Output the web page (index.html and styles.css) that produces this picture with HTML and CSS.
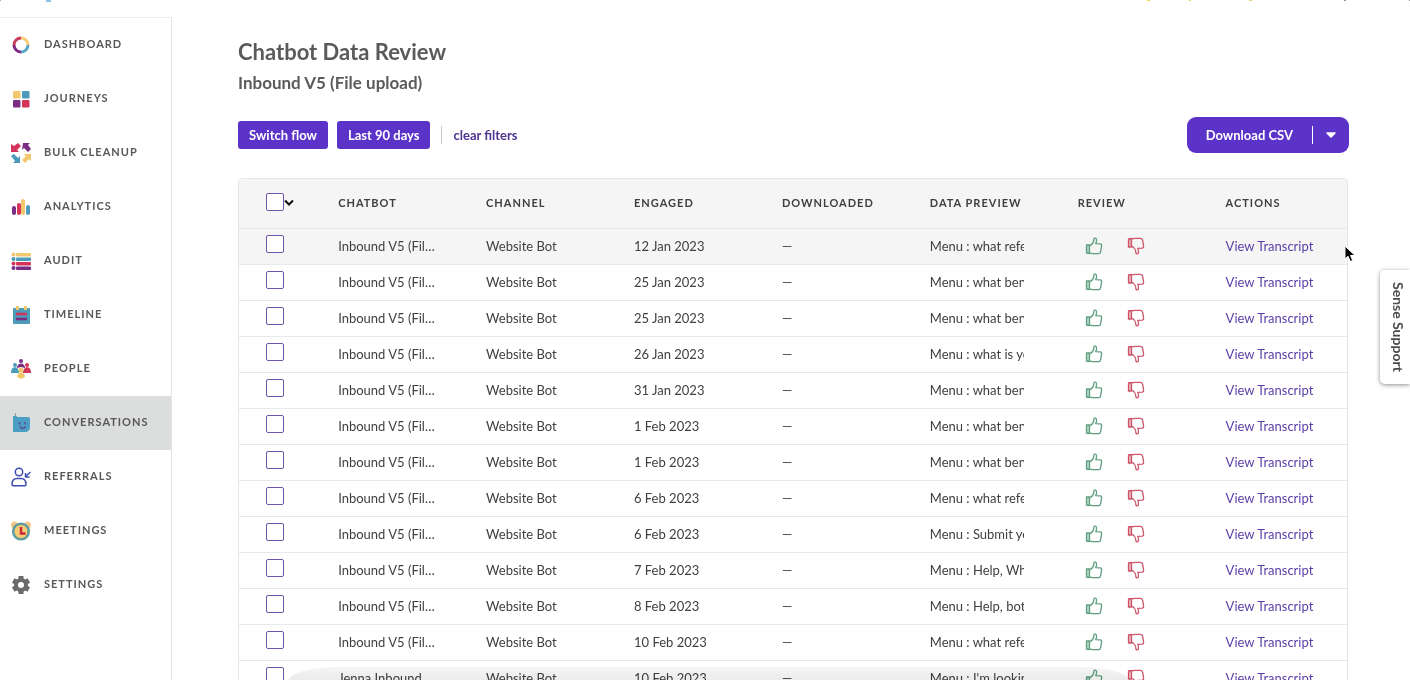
FILE: index.html
```
<!DOCTYPE html>
<html lang="en">
<head>
    <meta charset="UTF-8">
    <meta name="viewport" content="width=device-width, initial-scale=1.0">
    <title>Chatbot Data Review</title>
    <link rel="stylesheet" href="styles.css">
</head>
<body>
    <!-- Shared icons -->
    <svg class="sprite" aria-hidden="true">
        <symbol id="thumb" viewBox="0 0 18 18">
            <path d="M1.500 8h3v8.500l-3-.5zM4.500 9C6.500 8 8.300 6 8.700 3.800l.2-1.800c.3-1.300 2.300-1.100 2.600.4.300 1.500-.1 2.900-.8 4.300l4.400.2c1.200.1 1.700 1 1.500 1.900l-1 6c-.2 1.200-.9 1.800-2 1.900H8.200c-1.500 0-2.200-.6-3.700-.8" fill="none" stroke="currentColor" stroke-width="1.300" stroke-linejoin="round"/>
            <path d="M3 8v8" stroke="currentColor" stroke-width="1.400" opacity=".6"/>
        </symbol>
    </svg>

    <div class="topbar">
        <svg width="60" height="2"><path fill="#aaa" d="M0 0h1v1H0z"/><path fill="#8fc4e4" d="M46 0h5v2h-5z"/></svg>
        <svg width="280" height="2"><path fill="#e8d84a" d="M17 0h3v1h-3zM59 0h2v1h-2z"/><path fill="#e5cf79" d="M119 0h3v1h-3z"/><path fill="#999" d="M214 0h2v1h-2zM279 0h1v1h-1z"/></svg>
    </div>

    <div class="layout">
        <nav class="sidebar">
            <a href="#dashboard" class="nav-link">
                <svg class="nav-icon" viewBox="0 0 20 20" fill="none" stroke-width="3">
                    <path d="M10 3a7 7 0 0 1 7 7" stroke="#f7cd76"/>
                    <path d="M17 10a7 7 0 0 1-7 7" stroke="#58a5c5"/>
                    <path d="M10 17a7 7 0 0 1-7-7" stroke="#7d2a83"/>
                    <path d="M3 10a7 7 0 0 1 7-7" stroke="#c93c5c"/>
                </svg>
                <span>Dashboard</span>
            </a>
            <a href="#journeys" class="nav-link">
                <svg class="nav-icon" viewBox="0 0 20 20">
                    <rect x="2" y="2" width="7.500" height="7.500" rx="1" fill="#f2c76e"/>
                    <rect x="11" y="2" width="7.500" height="7.500" rx="1" fill="#4c9bba"/>
                    <rect x="2" y="11" width="7.500" height="7.500" rx="1" fill="#7b2c83"/>
                    <rect x="11" y="11" width="7.500" height="7.500" rx="1" fill="#d43459"/>
                </svg>
                <span>Journeys</span>
            </a>
            <a href="#cleanup" class="nav-link">
                <svg class="nav-icon" viewBox="0 0 20 20">
                    <path fill="#d43459" d="M0 1l3 2 4-3 3 3-4 4 2 2H0z"/>
                    <path fill="#7b2c83" d="M12 0h7l-2 2 3 4-3 3-4-4-2 2z"/>
                    <path fill="#4c9bba" d="M0 13l3-2 4 4 2-2v7H2l2-2z"/>
                    <path fill="#f2c76e" d="M12 11h8v7l-2-2-4 4-3-3 4-4z"/>
                </svg>
                <span>Bulk Cleanup</span>
            </a>
            <a href="#analytics" class="nav-link">
                <svg class="nav-icon" viewBox="0 0 20 20">
                    <rect x="1" y="9" width="4" height="9" rx="2" fill="#7b2c83"/>
                    <rect x="6" y="6" width="4" height="12" rx="2" fill="#d43459"/>
                    <rect x="10" y="2" width="4" height="16" rx="2" fill="#f2c76e"/>
                    <rect x="15" y="8" width="4" height="10" rx="2" fill="#4c9bba"/>
                </svg>
                <span>Analytics</span>
            </a>
            <a href="#audit" class="nav-link">
                <svg class="nav-icon" viewBox="0 0 20 20">
                    <g fill="#f2c76e"><circle cx="2.500" cy="3.500" r="2"/><rect x="5" y="2" width="15" height="3.500" rx="1"/></g>
                    <g fill="#4c9bba"><circle cx="2.500" cy="8" r="2"/><rect x="5" y="6.500" width="15" height="3.500" rx="1"/></g>
                    <g fill="#d43459"><circle cx="2.500" cy="12.500" r="2"/><rect x="5" y="11" width="15" height="3.500" rx="1"/></g>
                    <g fill="#7b2c83"><circle cx="2.500" cy="17" r="2"/><rect x="5" y="15.500" width="15" height="3.500" rx="1"/></g>
                </svg>
                <span>Audit</span>
            </a>
            <a href="#timeline" class="nav-link">
                <svg class="nav-icon" viewBox="0 0 20 20">
                    <rect x="2" y="3" width="17" height="16" rx="1" fill="#4c9bba"/>
                    <path d="M6.500 1v4M14.500 1v4" stroke="#f2c76e" stroke-width="3"/>
                    <path d="M5 9h11" stroke="#d43459" stroke-width="2.500"/>
                    <path d="M5 14h11" stroke="#7b2c83" stroke-width="2.500"/>
                </svg>
                <span>Timeline</span>
            </a>
            <a href="#people" class="nav-link">
                <svg class="nav-icon" viewBox="0 0 20 20">
                    <g fill="#7b2c83"><circle cx="10" cy="2" r="2"/><path d="M6 9c0-6 8-6 8 0l-4-1z"/></g>
                    <g fill="#4c9bba"><circle cx="4" cy="6" r="2"/><path d="M0 14c0-8 8-7 8 0z"/></g>
                    <g fill="#d43459"><circle cx="16" cy="6" r="2"/><path d="M12 14c0-7 8-8 8 0z"/></g>
                    <g fill="#f2c76e"><circle cx="10" cy="11" r="2.500"/><path d="M6 18c0-6 8-6 8 0l-4 2z"/></g>
                </svg>
                <span>People</span>
            </a>
            <a href="#conversations" class="nav-link active">
                <svg class="nav-icon" viewBox="0 0 20 20">
                    <path d="M4.500 0v4" stroke="#7f9ba7"/>
                    <path d="M2 3h3l2 1h10q2 0 2 2v8c0 3-2 5-5 5H2z" fill="#4c9fc4"/>
                    <path d="M8.500 9v2.500M14 9v2.500" stroke="#5f4299" stroke-width="1.500"/>
                    <path d="M9 13.500c1 2.500 4.500 2.500 5.500 0" fill="none" stroke="#5f4299" stroke-width="1.300"/>
                </svg>
                <span>Conversations</span>
            </a>
            <a href="#referrals" class="nav-link">
                <svg class="nav-icon" viewBox="0 0 20 20" fill="none" stroke="#3f4db0" stroke-width="1.500" stroke-linejoin="round">
                    <circle cx="8" cy="5" r="3.700"/>
                    <path d="M1 17.500c0-4 2-6 5-6h4c3 0 5 2 5 6 0 .8-.5 1.200-1.200 1.200H2.200C1.500 18.700 1 18.300 1 17.500z"/>
                    <path d="M19.500 5l-5 4.500M14.500 6v4h4"/>
                </svg>
                <span>Referrals</span>
            </a>
            <a href="#meetings" class="nav-link">
                <svg class="nav-icon" viewBox="0 0 20 20">
                    <circle cx="3.500" cy="4" r="3.500" fill="#f2c887"/>
                    <circle cx="16.500" cy="4" r="3.500" fill="#f2c887"/>
                    <circle cx="10" cy="10.500" r="7.800" fill="#f9cc76" stroke="#5f9c9d" stroke-width="2.500"/>
                    <path d="M10 6v6.500h4.500" fill="none" stroke="#c9293c" stroke-width="2.500"/>
                </svg>
                <span>Meetings</span>
            </a>
            <a href="#settings" class="nav-link">
                <svg class="nav-icon" viewBox="0 0 20 20">
                    <g stroke="#6b6b6b" stroke-width="5"><path d="M10 1v18M2.200 5.500l15.600 9M2.200 14.500l15.600-9"/></g>
                    <circle cx="10" cy="10" r="5" fill="#fff" stroke="#6b6b6b" stroke-width="4"/>
                </svg>
                <span>Settings</span>
            </a>
        </nav>

        <main class="content">
            <h1>Chatbot Data Review</h1>
            <h2>Inbound V5 (File upload)</h2>

            <div class="toolbar">
                <div class="filters">
                    <button type="button" class="btn">Switch flow</button>
                    <button type="button" class="btn">Last 90 days</button>
                    <a href="#clear" class="clear-link">clear filters</a>
                </div>
                <div class="download">
                    <button type="button" class="download-main">Download CSV</button>
                    <button type="button" class="download-more" aria-label="Download options">
                        <svg width="12" height="8" viewBox="0 0 12 8"><path d="M2 2h8L6 6z" fill="#fff" stroke="#fff" stroke-width="1.500" stroke-linejoin="round"/></svg>
                    </button>
                </div>
            </div>

            <div class="table-wrap">
                <table>
                    <thead>
                        <tr>
                            <th class="col-check">
                                <div class="select-all">
                                    <input type="checkbox" aria-label="Select all">
                                    <button type="button" aria-label="Selection options">
                                        <svg width="10" height="8" viewBox="0 0 10 8"><path d="M1 2.500l4 4 4-4" fill="none" stroke="#111" stroke-width="2"/></svg>
                                    </button>
                                </div>
                            </th>
                            <th>Chatbot</th>
                            <th>Channel</th>
                            <th>Engaged</th>
                            <th>Downloaded</th>
                            <th>Data Preview</th>
                            <th>Review</th>
                            <th class="col-actions">Actions</th>
                        </tr>
                    </thead>
                    <tbody id="rows"></tbody>
                </table>
            </div>
        </main>
    </div>

    <div class="bottom-shade"></div>
    <button type="button" class="support">Sense Support</button>
    <svg class="cursor" width="12" height="18" viewBox="0 0 12 18" aria-hidden="true">
        <path d="M1 1v13l3-2.800L6.300 16.500l2.400-1L6.500 10.500H11z" fill="#000" stroke="#fff"/>
    </svg>

    <script src="script.js"></script>
</body>
</html>
```
FILE: styles.css
```
* {
    box-sizing: border-box;
}

body {
    display: flex;
    flex-direction: column;
    height: 100vh;
    margin: 0;
    overflow: hidden;
    background: #fff;
    color: #3f3f3f;
    font-family: "Lato", "Open Sans", sans-serif;
    font-size: 13px;
}

button {
    margin: 0;
    padding: 0;
    border: 0;
    background: none;
    color: inherit;
    font: inherit;
    cursor: pointer;
}

a {
    text-decoration: none;
}

.sprite {
    position: absolute;
    width: 0;
    height: 0;
}

.topbar {
    display: flex;
    flex: none;
    justify-content: space-between;
    height: 17px;
}

.layout {
    display: flex;
    flex: 1;
    min-height: 0;
}

/* Sidebar */
.sidebar {
    flex: none;
    width: 172px;
    border-top: 1px solid #ededed;
    border-right: 1px solid #e6e6e6;
}

.nav-link {
    display: flex;
    align-items: center;
    gap: 13px;
    height: 54px;
    padding-left: 11px;
    color: #58585a;
    font-size: 11px;
    font-weight: 700;
    letter-spacing: 1px;
    text-transform: uppercase;
}

.nav-link span {
    padding-bottom: 4px;
}

.nav-link.active {
    background: #dcdddd;
}

.nav-icon {
    flex: none;
    width: 20px;
    height: 20px;
}

/* Content */
.content {
    flex: 1;
    min-width: 0;
    padding: 20px 61px 0 66px;
}

h1,
h2 {
    margin: 0;
    color: #5a5a5c;
    font-weight: 700;
}

h1 {
    font-size: 22px;
    line-height: 30px;
}

h2 {
    padding-top: 4px;
    font-size: 17px;
    line-height: 24px;
}

.toolbar {
    display: flex;
    align-items: center;
    justify-content: space-between;
    margin-top: 22px;
}

.filters {
    display: flex;
    align-items: center;
    gap: 9px;
}

.btn {
    height: 28px;
    padding: 0 11px 1px;
    border-radius: 3px;
    background: #5b33c9;
    color: #fff;
    font-weight: 700;
}

.clear-link {
    margin-left: 2px;
    padding-left: 11px;
    border-left: 1px solid #ccc;
    color: #4d3591;
    font-weight: 700;
    line-height: 18px;
}

.download {
    display: flex;
    align-items: center;
    height: 36px;
    border-radius: 9px;
    background: #5b33c9;
    color: #fff;
    font-weight: 700;
}

.download-main {
    padding: 0 19px 1px;
}

.download-more {
    display: flex;
    align-items: center;
    justify-content: center;
    width: 37px;
    height: 18px;
    border-left: 1px solid #fff;
}

/* Table */
.table-wrap {
    margin: 25px 1px 0 0;
    border: 1px solid #e6e6e6;
    border-radius: 4px;
    overflow: hidden;
}

table {
    width: 100%;
    table-layout: fixed;
    border-collapse: collapse;
}

th,
td {
    width: 13.35%;
    padding: 0 54px 1px 0;
    text-align: left;
    white-space: nowrap;
}

th {
    height: 49px;
    padding-right: 0;
    background: #f5f5f5;
    font-size: 11px;
    font-weight: 700;
    letter-spacing: 1px;
    text-transform: uppercase;
}

td {
    height: 36px;
    border-top: 1px solid #e8e8e8;
}

tbody tr:first-child {
    background: #f5f5f5;
}

.col-check {
    width: 8.95%;
    padding: 0 0 0 27px;
}

.col-bot {
    padding-right: 48px;
}

.col-actions {
    width: auto;
    padding-right: 0;
}

input[type="checkbox"] {
    display: block;
    width: 18px;
    height: 18px;
    margin: 0;
    appearance: none;
    border: 1px solid #6f55ab;
    border-radius: 2px;
    background: #fff;
}

td.col-check {
    padding-bottom: 4px;
}

.select-all {
    display: flex;
    align-items: center;
    padding-bottom: 2px;
}

.select-all svg,
.review svg {
    display: block;
}

.clip {
    overflow: hidden;
}

.ellipsis {
    overflow: hidden;
    text-overflow: ellipsis;
}

.review {
    display: flex;
    gap: 24px;
    padding-left: 7px;
}

.up {
    color: #5e9f80;
}

.down {
    color: #cb5468;
}

.down svg {
    transform: scaleY(-1);
}

td a {
    color: #5b3fa8;
}

/* Overlays */
.bottom-shade {
    position: absolute;
    right: 20%;
    bottom: 0;
    left: 20.5%;
    height: 13px;
    border-radius: 50px 50px 0 0 / 13px 13px 0 0;
    background: linear-gradient(#f5f5f5, #ebebeb);
    mix-blend-mode: multiply;
    pointer-events: none;
}

.support {
    position: absolute;
    top: 270px;
    right: 0;
    width: 30px;
    height: 114px;
    padding-left: 6px;
    border-radius: 5px 0 0 5px;
    background: #fff;
    box-shadow: 0 1px 4px rgba(0, 0, 0, 0.45);
    color: #4c4c4c;
    font-size: 14px;
    font-weight: 700;
    writing-mode: vertical-rl;
}

.cursor {
    position: absolute;
    top: 245px;
    left: 1344px;
    pointer-events: none;
}
```
FILE: script.js
```
const rows = [
    ['Inbound V5 (File upload)', '12 Jan 2023', 'what referral'],
    ['Inbound V5 (File upload)', '25 Jan 2023', 'what benefits'],
    ['Inbound V5 (File upload)', '25 Jan 2023', 'what benefits'],
    ['Inbound V5 (File upload)', '26 Jan 2023', 'what is your'],
    ['Inbound V5 (File upload)', '31 Jan 2023', 'what benefits'],
    ['Inbound V5 (File upload)', '1 Feb 2023', 'what benefits'],
    ['Inbound V5 (File upload)', '1 Feb 2023', 'what benefits'],
    ['Inbound V5 (File upload)', '6 Feb 2023', 'what referral'],
    ['Inbound V5 (File upload)', '6 Feb 2023', 'Submit your'],
    ['Inbound V5 (File upload)', '7 Feb 2023', 'Help, What'],
    ['Inbound V5 (File upload)', '8 Feb 2023', 'Help, bot:'],
    ['Inbound V5 (File upload)', '10 Feb 2023', 'what referral'],
    ['Jenna Inbound', '10 Feb 2023', "I'm looking"]
];

const thumb = '<svg width="18" height="18"><use href="#thumb"/></svg>';

document.getElementById('rows').innerHTML = rows.map(([bot, date, preview]) => `
    <tr>
        <td class="col-check"><input type="checkbox" aria-label="Select ${bot}, ${date}"></td>
        <td class="col-bot"><div class="ellipsis">${bot}</div></td>
        <td>Website Bot</td>
        <td>${date}</td>
        <td>—</td>
        <td><div class="clip">Menu : ${preview}</div></td>
        <td class="col-actions"><div class="review">
            <button type="button" class="up" aria-label="Approve">${thumb}</button>
            <button type="button" class="down" aria-label="Reject">${thumb}</button>
        </div></td>
        <td class="col-actions"><a href="#transcript">View Transcript</a></td>
    </tr>`).join('');
```
